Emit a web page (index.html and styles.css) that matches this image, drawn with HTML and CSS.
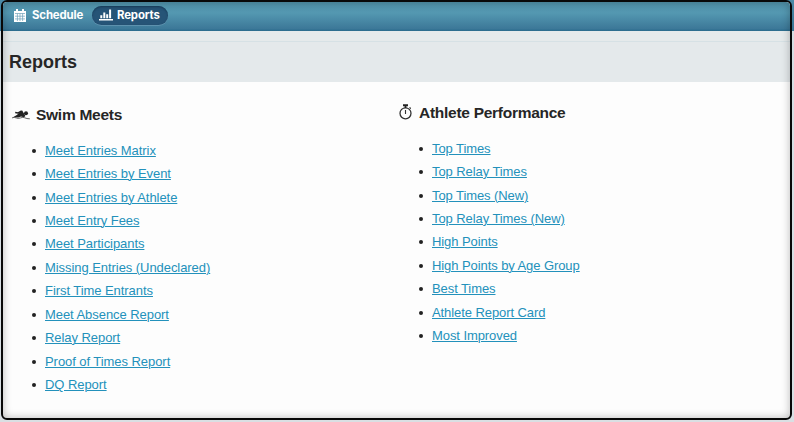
FILE: index.html
```
<!DOCTYPE html>
<html lang="en">
<head>
<meta charset="utf-8">
<title>Reports</title>
<link rel="stylesheet" href="styles.css">
</head>
<body>
<div class="frame">
  <nav class="nav">
    <a class="tab"><svg class="cal" width="12" height="13" viewBox="0 0 12 13"><path fill="#fff" d="M0 2h2V0h2v2h4V0h2v2h2v11H0z"/><path stroke="#6da0b9" stroke-width=".7" d="M1 4.5h10M1 7.2h10M1 9.9h10M3.4 4.5V12M6 4.5V12M8.6 4.5V12"/></svg><span class="schedule">Schedule</span></a>
    <a class="tab active"><svg class="bars" width="14" height="12" viewBox="0 0 14 12"><path fill="#fff" d="M0 10h14v1.6H0zM1.3 6.3h2v3h-2zM4.3 3.5h2v5.8h-2zM7.2 5.3h2v4h-2zM10.1.5h2v8.8h-2z"/></svg><span class="reports">Reports</span></a>
  </nav>
  <div class="strip"></div>
  <header class="title"><h1>Reports</h1></header>
  <main class="columns">
    <section class="swim">
      <h2><svg class="swimmer" width="18" height="10" viewBox="0 0 18 10"><path fill="none" stroke="#222" stroke-width="1.5" stroke-linejoin="round" d="M3.2 2.6 6 2.9 9.4 1.2"/><path fill="#222" d="M8.6.8 10.2.6 13.4 6 12 7.2 9 6.6 6.5 7.4 1 7.2 5.2 4.8z"/><circle cx="14" cy="3.3" r="2" fill="#222"/><path fill="none" stroke="#555" stroke-width=".9" d="M0 7.9q2.2-1.1 4.2 0t4.4 0 4.2-.1 5 1"/></svg><span>Swim Meets</span></h2>
      <ul>
        <li><a>Meet Entries Matrix</a></li>
        <li><a>Meet Entries by Event</a></li>
        <li><a>Meet Entries by Athlete</a></li>
        <li><a>Meet Entry Fees</a></li>
        <li><a>Meet Participants</a></li>
        <li><a>Missing Entries (Undeclared)</a></li>
        <li><a>First Time Entrants</a></li>
        <li><a>Meet Absence Report</a></li>
        <li><a>Relay Report</a></li>
        <li><a>Proof of Times Report</a></li>
        <li><a>DQ Report</a></li>
      </ul>
    </section>
    <section class="athlete">
      <h2><svg class="watch" width="13" height="16" viewBox="0 0 13 16"><circle cx="6.5" cy="9.3" r="5.5" fill="none" stroke="#333" stroke-width="1.3"/><path fill="#222" d="M4 .2h5v2H4zM5.6 2h1.8v2H5.6zM11 3l1.2 1.2-.8.7-1.2-1.1z"/><path stroke="#333" stroke-width="1.1" d="M6.5 6v4"/></svg><span>Athlete Performance</span></h2>
      <ul>
        <li><a>Top Times</a></li>
        <li><a>Top Relay Times</a></li>
        <li><a>Top Times (New)</a></li>
        <li><a>Top Relay Times (New)</a></li>
        <li><a>High Points</a></li>
        <li><a>High Points by Age Group</a></li>
        <li><a>Best Times</a></li>
        <li><a>Athlete Report Card</a></li>
        <li><a>Most Improved</a></li>
      </ul>
    </section>
  </main>
</div>
</body>
</html>
```
FILE: styles.css
```
* { box-sizing: border-box; }
body {
  margin: 0;
  height: 422px;
  overflow: hidden;
  background: linear-gradient(#4b8ba7 0, #3a7393 31px, #d5dde2 31px, #d9dfe3 100%);
  font-family: "Liberation Sans", Arial, sans-serif;
  color: #262626;
}
.frame {
  position: relative;
  width: 791px;
  height: 420px;
  margin-left: 1px;
  border: 2px solid #080808;
  border-radius: 6px;
  background: #fdfdfd;
  overflow: hidden;
}
.frame::after {
  content: "";
  position: absolute;
  inset: 0;
  border-radius: 4px;
  box-shadow: inset 0 0 8px rgba(0, 0, 0, .28);
  pointer-events: none;
}
.nav {
  display: flex;
  align-items: center;
  height: 29px;
  padding: 0 0 3px 11px;
  background: linear-gradient(#5193ab 0, #5498b1 38%, #3c7898 92%, #286b8c 100%);
}
.tab {
  display: flex;
  align-items: center;
  color: #fff;
  font: bold 11.4px/18px Inter, sans-serif;
  letter-spacing: -.14px;
}
.cal { margin-right: 6px; }
.schedule { width: 51px; white-space: nowrap; }
.active {
  height: 19px;
  width: 76px;
  margin-left: 9px;
  padding-left: 7px;
  border-radius: 10px;
  background: #265477;
  box-shadow: inset 0 1px 2px #193e5b, 0 1px 0 #5d91ae;
}
.bars { margin-right: 4px; }
.strip { height: 11px; background: #e5eaeb; border-bottom: 1px solid #d6e1e5; }
.title { display: flex; align-items: center; height: 40px; padding-left: 6px; background: #e4e9eb; }
h1 { margin: 0; font-size: 18px; line-height: 22px; }
.columns { display: flex; }
.swim { width: 387px; padding: 23px 0 0 9px; }
.athlete { padding: 21px 0 0 9px; }
h2 { display: flex; align-items: center; height: 20px; margin: 0; font-size: 15.5px; line-height: 20px; letter-spacing: -.27px; }
.swimmer { margin-right: 6px; }
.watch { margin: -3px 7px 0 0; }
ul { margin: 14px 0 0; padding: 0; list-style: none; }
li { display: flex; align-items: center; height: 23.45px; padding-left: 20px; font-size: 13px; line-height: 20px; letter-spacing: -.06px; }
li::before { content: ""; width: 4px; height: 4px; border-radius: 50%; background: #222; margin-right: 9px; }
.athlete li { letter-spacing: -.08px; }
a { color: #2391bb; }
li a { text-decoration: underline; text-underline-offset: 1px; text-decoration-thickness: 1px; }
```
